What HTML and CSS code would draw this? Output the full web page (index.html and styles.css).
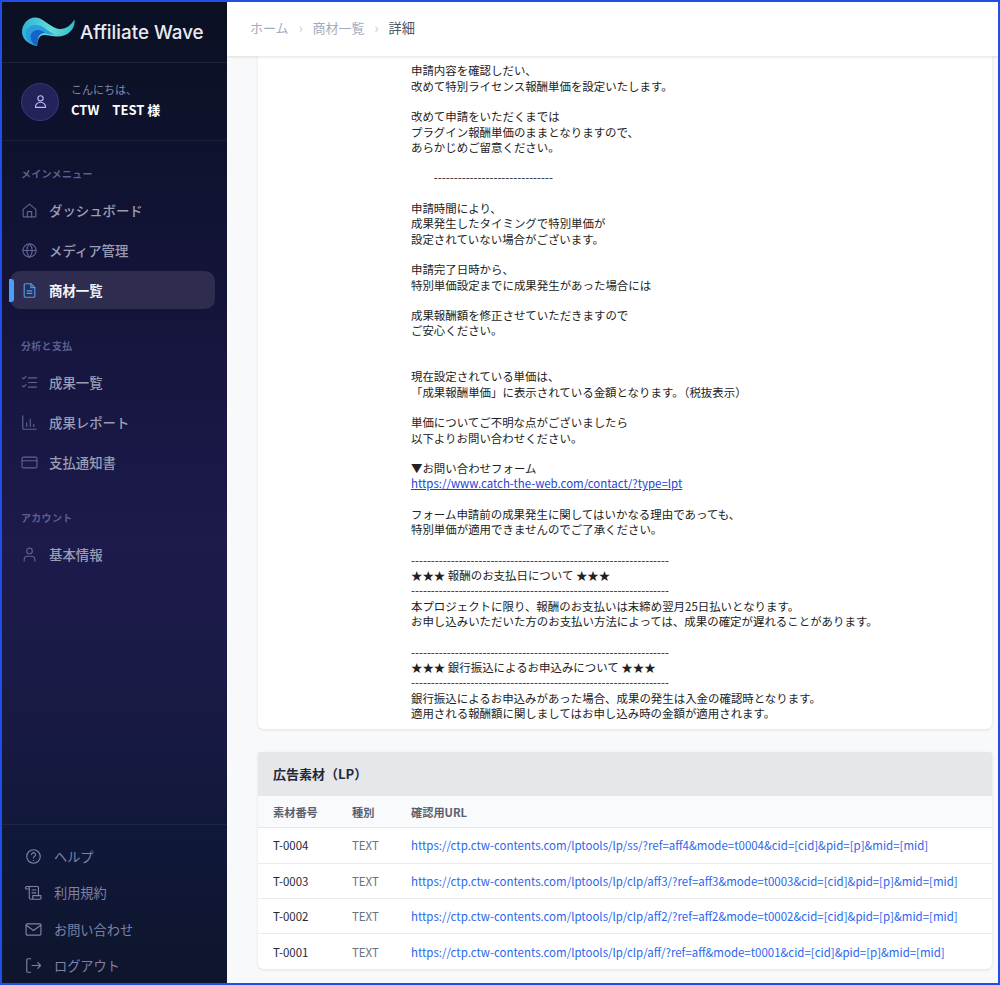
FILE: index.html
```html
<!DOCTYPE html>
<html>
<head>
<title>Affiliate Wave</title>
<link rel="stylesheet" href="styles.css">
</head>
<body>
<div class="frame">
  <aside class="sidebar">
    <div class="brand">
      <svg class="brand-logo" viewBox="0 0 54 30" width="54" height="30">
        <defs>
          <linearGradient id="wave-a" x1="0" y1="0" x2="1" y2="0">
            <stop offset="0" stop-color="#2cb2d4"/>
            <stop offset="0.55" stop-color="#62dcd6"/>
            <stop offset="1" stop-color="#35bcc8"/>
          </linearGradient>
        </defs>
        <path d="M1 15C1 7 7 .5 14 .5c8 0 13 8 22 11 7 2 13-2 17.500-9 1 9-6 17-17 17-5 0-9-1.500-13-1.500-4 0-7 3-7.500 11C7 27 1 22 1 15z" fill="url(#wave-a)"/>
        <path d="M4.500 17C4.500 11 10 7.500 15.500 8c7 .5 11 7 19 9.500-5 .5-8-1-12-1.500-5 0-7 4-6.500 13C9 27 4.500 23 4.500 17z" fill="#2a9ddc"/>
        <path d="M9.500 20c0-5 4.500-7.500 8.500-7 2 .3 4 1.500 6 3-5-.5-8 3-7.500 13-4-1.500-7-5-7-9z" fill="#1266c8"/>
      </svg>
      <span class="brand-name">Affiliate Wave</span>
    </div>
    <div class="user">
      <div class="user-avatar">
        <svg class="icon" viewBox="0 0 24 24"><circle cx="12" cy="7.500" r="3.700"/><path d="M4.800 20.200a7.200 7.200 0 0 1 14.400 0z"/></svg>
      </div>
      <div>
        <div class="user-hello">こんにちは、</div>
        <div class="user-name">CTW　TEST 様</div>
      </div>
    </div>
    <nav class="nav">
      <div class="nav-title">メインメニュー</div>
      <a class="nav-item"><svg class="icon" viewBox="0 0 24 24"><path d="M3 10.500 12 3l9 7.500V20a1 1 0 0 1-1 1H4a1 1 0 0 1-1-1z"/><path d="M9 21v-7.500h6V21"/></svg>ダッシュボード</a>
      <a class="nav-item"><svg class="icon" viewBox="0 0 24 24"><circle cx="12" cy="12" r="9.300"/><path d="M2.700 12h18.600M12 2.700c3 3 3.800 6 3.800 9.300s-.8 6.300-3.800 9.300c-3-3-3.800-6-3.800-9.300s.8-6.300 3.800-9.300z"/></svg>メディア管理</a>
      <a class="nav-item active"><svg class="icon" viewBox="0 0 24 24"><path d="M14 2.500H6a1.500 1.500 0 0 0-1.500 1.500v16A1.500 1.500 0 0 0 6 21.500h12a1.500 1.500 0 0 0 1.500-1.500V8z"/><path d="M14 2.500V8h5.500M8.500 12.500h7M8.500 16h7"/></svg>商材一覧</a>

      <div class="nav-title">分析と支払</div>
      <a class="nav-item"><svg class="icon" viewBox="0 0 24 24"><path d="M10.500 5.500H22M10.500 12H22M10.500 18.500H22M2 5l1.800 1.800L7 3.500M2 16.500l1.800 1.800L7 15"/></svg>成果一覧</a>
      <a class="nav-item"><svg class="icon" viewBox="0 0 24 24"><path d="M2.500 2.500V20a1.500 1.500 0 0 0 1.500 1.500h17.500M8 17.500v-5M13 17.500V7M18 17.500v-3"/></svg>成果レポート</a>
      <a class="nav-item"><svg class="icon" viewBox="0 0 24 24"><rect x="1.500" y="4.500" width="21" height="15" rx="2"/><path d="M1.500 9.500h21"/></svg>支払通知書</a>

      <div class="nav-title">アカウント</div>
      <a class="nav-item"><svg class="icon" viewBox="0 0 24 24"><circle cx="12" cy="7" r="4"/><path d="M4.500 21.500v-2a5 5 0 0 1 5-5h5a5 5 0 0 1 5 5v2"/></svg>基本情報</a>
    </nav>
    <div class="side-foot">
      <a class="foot-item"><svg class="icon" viewBox="0 0 24 24"><circle cx="12" cy="12" r="9.500"/><path d="M9.300 9.300a2.800 2.800 0 1 1 4.300 2.400c-1 .6-1.600 1.200-1.600 2.300M12 17.300v.2"/></svg>ヘルプ</a>
      <a class="foot-item"><svg class="icon" viewBox="0 0 24 24"><path d="M2.500 3.500h15a1.500 1.500 0 0 1 1.500 1.500v11M2.500 3.500a2 2 0 0 0-1 3.500H6V5a1.500 1.500 0 0 0-1.500-1.500M6 7v12a2.500 2.500 0 0 0 2.500 2.500H21a1.500 1.500 0 0 0 1.500-1.500v-3.500H11V20a1.500 1.500 0 0 1-1.500 1.500M10 8.500h5.500M10 12.500h5.500"/></svg>利用規約</a>
      <a class="foot-item"><svg class="icon" viewBox="0 0 24 24"><rect x="1.500" y="4" width="21" height="16" rx="1.500"/><path d="m1.800 6 10.200 7.500L22.200 6"/></svg>お問い合わせ</a>
      <a class="foot-item"><svg class="icon" viewBox="0 0 24 24"><path d="M8 2.500H4A1.500 1.500 0 0 0 2.500 4v16A1.500 1.500 0 0 0 4 21.500h4M10 12h12M18 8l4 4-4 4"/></svg>ログアウト</a>
    </div>
  </aside>

  <div class="main">
    <header class="topbar">
      <span class="crumb">ホーム</span>
      <span class="crumb-sep">›</span>
      <span class="crumb">商材一覧</span>
      <span class="crumb-sep">›</span>
      <span class="crumb current">詳細</span>
    </header>
    <div class="content">
      <section class="card notes">
        <div class="notes-body">申請内容を確認しだい、
改めて特別ライセンス報酬単価を設定いたします。

改めて申請をいただくまでは
プラグイン報酬単価のままとなりますので、
あらかじめご留意ください。

　　------------------------------

申請時間により、
成果発生したタイミングで特別単価が
設定されていない場合がございます。

申請完了日時から、
特別単価設定までに成果発生があった場合には

成果報酬額を修正させていただきますので
ご安心ください。


現在設定されている単価は、
「成果報酬単価」に表示されている金額となります。（税抜表示）

単価についてご不明な点がございましたら
以下よりお問い合わせください。

▼お問い合わせフォーム
<a href="#">https://www.catch-the-web.com/contact/?type=lpt</a>

フォーム申請前の成果発生に関してはいかなる理由であっても、
特別単価が適用できませんのでご了承ください。

-----------------------------------------------------------------
★★★ 報酬のお支払日について ★★★
-----------------------------------------------------------------
本プロジェクトに限り、報酬のお支払いは末締め翌月25日払いとなります。
お申し込みいただいた方のお支払い方法によっては、成果の確定が遅れることがあります。

-----------------------------------------------------------------
★★★ 銀行振込によるお申込みについて ★★★
-----------------------------------------------------------------
銀行振込によるお申込みがあった場合、成果の発生は入金の確認時となります。
適用される報酬額に関しましてはお申し込み時の金額が適用されます。</div>
      </section>

      <section class="card materials">
        <h2 class="card-title">広告素材（LP）</h2>
        <table class="table">
          <thead>
            <tr><th class="col-no">素材番号</th><th class="col-type">種別</th><th>確認用URL</th></tr>
          </thead>
          <tbody>
            <tr><td>T-0004</td><td class="type">TEXT</td><td><a href="#">https://ctp.ctw-contents.com/lptools/lp/ss/?ref=aff4&amp;mode=t0004&amp;cid=[cid]&amp;pid=[p]&amp;mid=[mid]</a></td></tr>
            <tr><td>T-0003</td><td class="type">TEXT</td><td><a href="#">https://ctp.ctw-contents.com/lptools/lp/clp/aff3/?ref=aff3&amp;mode=t0003&amp;cid=[cid]&amp;pid=[p]&amp;mid=[mid]</a></td></tr>
            <tr><td>T-0002</td><td class="type">TEXT</td><td><a href="#">https://ctp.ctw-contents.com/lptools/lp/clp/aff2/?ref=aff2&amp;mode=t0002&amp;cid=[cid]&amp;pid=[p]&amp;mid=[mid]</a></td></tr>
            <tr><td>T-0001</td><td class="type">TEXT</td><td><a href="#">https://ctp.ctw-contents.com/lptools/lp/clp/aff/?ref=aff&amp;mode=t0001&amp;cid=[cid]&amp;pid=[p]&amp;mid=[mid]</a></td></tr>
          </tbody>
        </table>
      </section>
    </div>
  </div>
</div>
</body>
</html>
```

FILE: styles.css
```css
* {
  box-sizing: border-box;
}

body {
  margin: 0;
  font-family: "Noto Sans CJK JP", "Noto Sans", sans-serif;
  color: #1f2937;
}

.frame {
  display: flex;
  height: 985px;
  overflow: hidden;
  border: 2px solid #1f4fe8;
  background-color: #f8f9fb;
}

.icon {
  width: 17px;
  height: 17px;
  flex: none;
  fill: none;
  stroke: currentColor;
  stroke-width: 1.6;
  stroke-linecap: round;
  stroke-linejoin: round;
}

/* sidebar */
.sidebar {
  display: flex;
  flex-direction: column;
  flex: none;
  width: 225px;
  background: linear-gradient(180deg, #0a1022 0%, #14143a 30%, #1d1a4c 55%, #191a44 72%, #10183a 85%, #0e152c 100%);
}

.brand {
  display: flex;
  align-items: center;
  gap: 5px;
  height: 61px;
  padding-left: 19px;
  border-bottom: 1px solid rgba(255, 255, 255, 0.08);
}

.brand-name {
  font-family: Inter, sans-serif;
  font-size: 18.800px;
  font-weight: 500;
  color: #e8ebf2;
  white-space: nowrap;
}

.user {
  display: flex;
  align-items: center;
  gap: 12px;
  height: 78px;
  padding-left: 19px;
  border-bottom: 1px solid rgba(255, 255, 255, 0.05);
}

.user-avatar {
  display: flex;
  align-items: center;
  justify-content: center;
  width: 38px;
  height: 38px;
  border: 1px solid #3a3a78;
  border-radius: 50%;
  background-color: #23235a;
  color: #b9bdf0;
}

.user-hello {
  font-size: 11px;
  line-height: 15px;
  color: #8087ab;
}

.user-name {
  font-size: 13px;
  line-height: 22px;
  margin-top: 2px;
  font-weight: 700;
  color: #fff;
}

.nav {
  flex: 1;
  padding: 26px 12px 0 8px;
}

.nav-title {
  height: 14px;
  margin: 30px 0 10px 11px;
  font-size: 10px;
  line-height: 14px;
  font-weight: 700;
  letter-spacing: 0.3px;
  color: #5a5f90;
}

.nav-title:first-child {
  margin-top: 0;
}

.nav-item {
  position: relative;
  display: flex;
  align-items: center;
  gap: 11px;
  height: 38px;
  margin-bottom: 2px;
  padding-left: 11px;
  border-radius: 10px;
  font-size: 13.400px;
  font-weight: 500;
  color: #9a9db4;
}

.nav-item .icon {
  color: #5f6390;
}

.nav-item.active {
  background-color: #2e2d4f;
  font-weight: 700;
  color: #f2f3f8;
}

.nav-item.active .icon {
  color: #4a9cf5;
}

.nav-item.active::before {
  content: "";
  position: absolute;
  left: -1px;
  top: 8px;
  width: 5px;
  height: 23px;
  border-radius: 0 3px 3px 0;
  background-color: #4a9ff8;
}

.side-foot {
  height: 159px;
  padding: 13px 0 0 23px;
  border-top: 1px solid rgba(255, 255, 255, 0.06);
}

.foot-item {
  display: flex;
  align-items: center;
  gap: 12px;
  height: 36.500px;
  font-size: 13.200px;
  color: #7d82a6;
}

/* main */
.main {
  flex: 1;
  min-width: 0;
}

.topbar {
  position: relative;
  display: flex;
  align-items: center;
  height: 54px;
  padding: 0 0 3px 23px;
  background-color: #fff;
  box-shadow: 0 1px 3px rgba(0, 0, 0, 0.12);
  font-size: 13px;
}

.crumb {
  color: #a3acbd;
}

.crumb.current {
  font-size: 13.200px;
  color: #4b5563;
}

.crumb-sep {
  margin: 0 10px;
  color: #c3c9d4;
}

.content {
  padding: 0 6px 0 31px;
}

.card {
  overflow: hidden;
  border-radius: 6px;
  background-color: #fff;
  box-shadow: 0 1px 3px rgba(0, 0, 0, 0.1);
}

.notes {
  border-radius: 0 0 6px 6px;
  padding: 7.400px 0 7.600px 153px;
}

.notes-body {
  white-space: pre-line;
  font-size: 11.450px;
  line-height: 15.290px;
  color: #222;
}

.notes-body a {
  color: #1a44d6;
}

.materials {
  margin-top: 23px;
  border-radius: 2px 2px 6px 6px;
}

.card-title {
  height: 44px;
  margin: 0;
  padding-left: 15px;
  background-color: #e5e7eb;
  font-size: 13px;
  line-height: 44px;
  font-weight: 700;
  color: #1f2937;
}

.table {
  width: 100%;
  border-collapse: collapse;
  font-size: 11.470px;
}

.table th {
  height: 32px;
  padding: 0 0 0 15px;
  background-color: #f9fafb;
  border-bottom: 1px solid #e5e7eb;
  text-align: left;
  font-size: 11.200px;
  font-weight: 700;
  color: #596170;
}

.table td {
  height: 35.400px;
  padding: 0 0 0.500px 15px;
  border-bottom: 1px solid #e9ebef;
}

.table tr:last-child td {
  border-bottom: none;
}

.col-no {
  width: 79px;
}

.col-type {
  width: 59px;
}

.type {
  color: #6b7280;
}

.table a {
  color: #2a66ee;
  text-decoration: none;
}
```
